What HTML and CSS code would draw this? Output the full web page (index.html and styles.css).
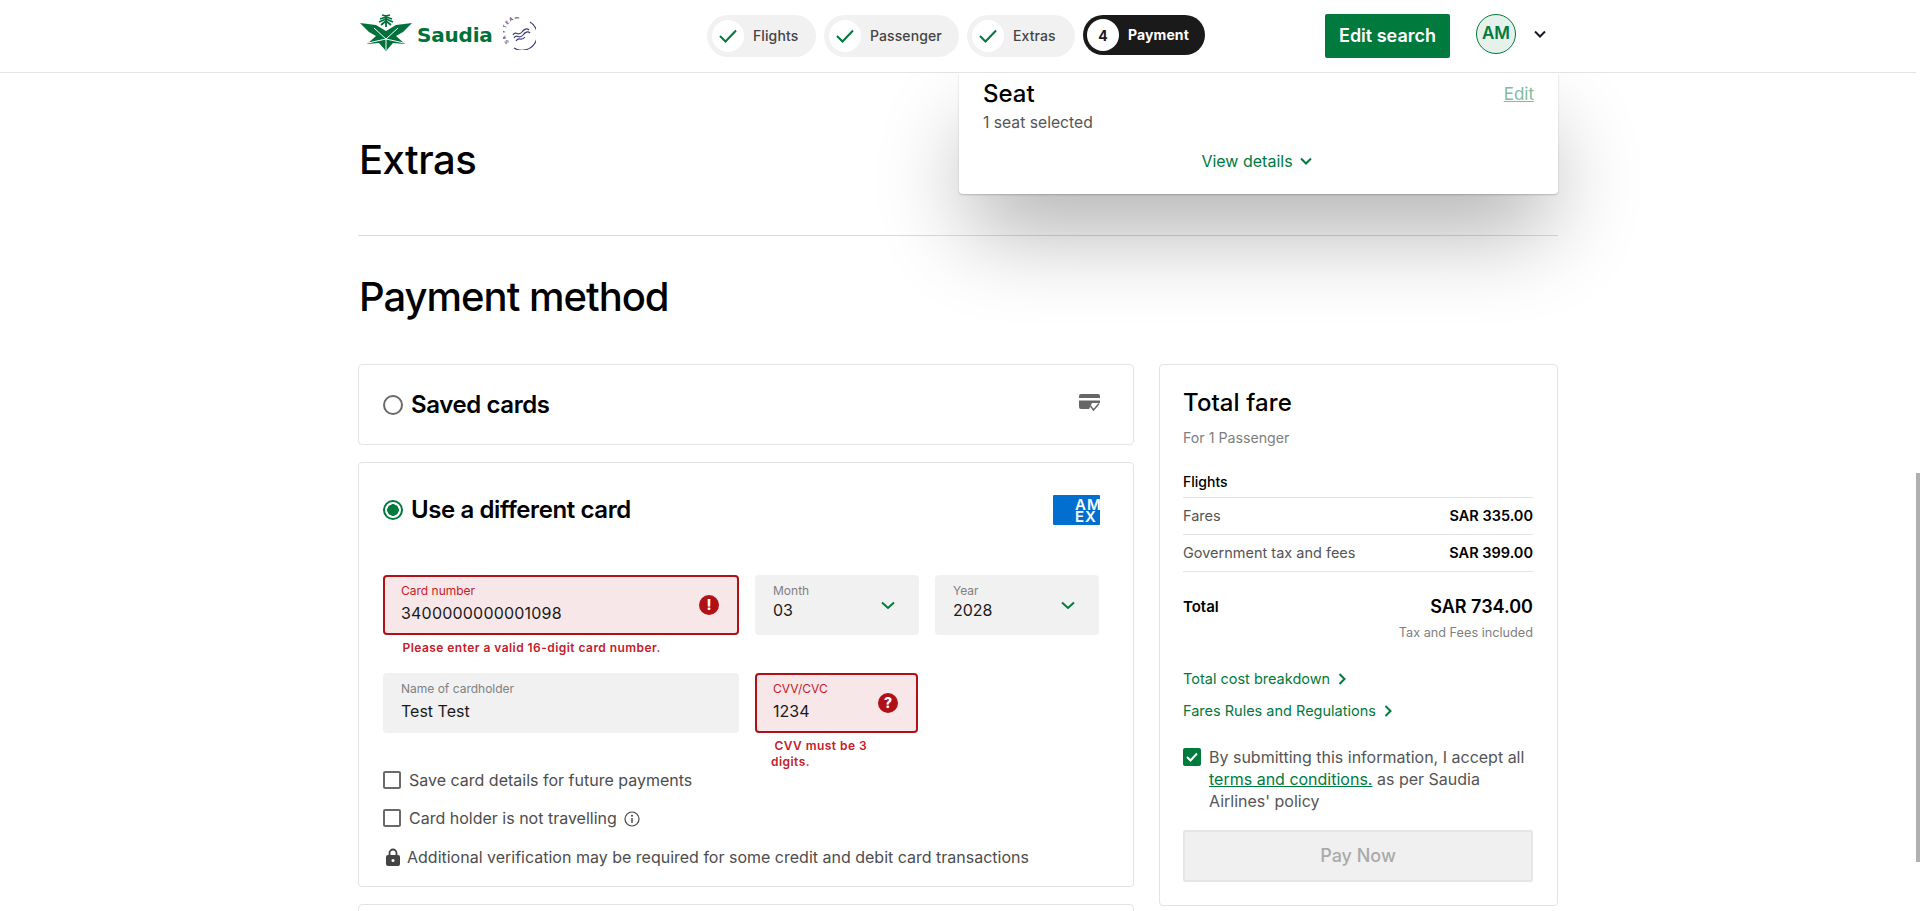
FILE: index.html
```html
<!DOCTYPE html>
<html lang="en">
<head>
<meta charset="UTF-8">
<title>Saudia - Payment</title>
<link rel="stylesheet" href="styles.css">
</head>
<body>

<header class="topbar">
  <div class="topbar-inner">
    <div class="brand">
      <svg class="emblem" width="52" height="37" viewBox="0 0 52 37">
        <g fill="none" stroke="#00713a" stroke-width="1.8">
          <path d="M26 13V1M26 3L20 5M26 2L22 1M26 3L32 5M26 2L30 1M26 5L19 8M26 5L33 8M26 7L21 11M26 7L31 11"/>
        </g>
        <path fill="#00713a" d="M0 9L16 11L26 17L36 11L52 9L43 18L36 22L45 30L33 29L26 37L19 29L7 30L16 22L9 18Z"/>
        <path fill="none" stroke="#fff" stroke-width="1" d="M14 14L26 25L38 14M26 25V36M8 29L26 25L44 29"/>
      </svg>
      <span class="wordmark">Saudia</span>
      <svg class="skyteam" width="33" height="33" viewBox="0 0 33 33">
        <path fill="none" stroke="#3d3a78" stroke-width="1.2" d="M27 5A15 15 0 0 1 11 31"/>
        <defs><path id="skyarc" d="M6 25A13 13 0 0 1 26 6"/></defs>
        <text class="skyteam-text"><textPath href="#skyarc">SKYTEAM</textPath></text>
        <path fill="none" stroke="#3d3a78" stroke-width="1.2" d="M10 18C13 13 15 20 19 15C21 12 24 11 26 13M11 21C14 16 16 23 20 18C22 15 25 14 27 16M13 24C16 19 18 25 22 20"/>
      </svg>
    </div>

    <ol class="steps">
      <li class="step step-flights"><span class="step-dot"><svg width="20" height="16" viewBox="0 0 20 16"><path class="tick" d="M2 8L7.500 13.500L18 2.500"/></svg></span>Flights</li>
      <li class="step step-passenger"><span class="step-dot"><svg width="20" height="16" viewBox="0 0 20 16"><path class="tick" d="M2 8L7.500 13.500L18 2.500"/></svg></span>Passenger</li>
      <li class="step step-extras"><span class="step-dot"><svg width="20" height="16" viewBox="0 0 20 16"><path class="tick" d="M2 8L7.500 13.500L18 2.500"/></svg></span>Extras</li>
      <li class="step step-current"><span class="step-dot">4</span>Payment</li>
    </ol>

    <div class="account">
      <button class="edit-search">Edit search</button>
      <span class="avatar">AM</span>
      <svg class="account-chev" width="12" height="8" viewBox="0 0 12 8"><path class="chev-dark" d="M1 1.500L6 6.500L11 1.500"/></svg>
    </div>
  </div>
</header>

<main class="page">
  <div class="seat-popover">
    <div class="seat-row">
      <h3>Seat</h3>
      <a class="seat-edit">Edit</a>
    </div>
    <p class="seat-note">1 seat selected</p>
    <a class="view-details">View details
      <svg width="12" height="8" viewBox="0 0 12 8"><path class="chev-green" d="M1 1.500L6 6.500L11 1.500"/></svg>
    </a>
  </div>

  <h1 class="extras-title">Extras</h1>
  <h2 class="method-title">Payment method</h2>

  <div class="columns">
    <section class="methods">
      <div class="card card-saved">
        <span class="radio"></span>
        <span class="card-title">Saved cards</span>
        <svg class="saved-icon" width="21" height="18" viewBox="0 0 21 18">
          <path fill="#666" d="M2 0H19A2 2 0 0 1 21 2V9H13L10 15H2A2 2 0 0 1 0 13V2A2 2 0 0 1 2 0Z"/>
          <rect x="0" y="4" width="21" height="2.500" fill="#fff"/>
          <path fill="none" stroke="#666" stroke-width="1.500" d="M11.500 12L14.500 16L20 9.500"/>
        </svg>
      </div>

      <div class="card card-new">
        <div class="card-head">
          <span class="radio radio-on"></span>
          <span class="card-title">Use a different card</span>
          <span class="amex"><span>AM<br>EX</span></span>
        </div>

        <div class="form-grid">
          <div>
            <div class="field field-error">
              <label>Card number</label>
              <span class="value value-low card-digits">3400000000001098</span>
              <span class="badge">!</span>
            </div>
            <p class="error">&nbsp;Please enter a valid 16-digit card number.</p>
          </div>
          <div class="field">
            <label>Month</label>
            <span class="value value-high">03</span>
            <svg class="select-chev" width="14" height="9" viewBox="0 0 14 9"><path class="chev-green" d="M1 1.500L7 7L13 1.500"/></svg>
          </div>
          <div class="field">
            <label>Year</label>
            <span class="value value-high">2028</span>
            <svg class="select-chev" width="14" height="9" viewBox="0 0 14 9"><path class="chev-green" d="M1 1.500L7 7L13 1.500"/></svg>
          </div>
          <div class="field">
            <label>Name of cardholder</label>
            <span class="value value-low">Test Test</span>
          </div>
          <div class="cvv-cell">
            <div class="field field-error">
              <label>CVV/CVC</label>
              <span class="value value-low">1234</span>
              <span class="badge">?</span>
            </div>
            <p class="error error-narrow">&nbsp;CVV must be 3 digits.</p>
          </div>
        </div>

        <div class="check-row check-row-first"><span class="checkbox"></span>Save card details for future payments</div>
        <div class="check-row"><span class="checkbox"></span>Card holder is not travelling
          <svg class="info" width="16" height="16" viewBox="0 0 16 16">
            <circle cx="8" cy="8" r="7" fill="none" stroke="#444" stroke-width="1.200"/>
            <path d="M8 7V12" stroke="#444" stroke-width="1.400"/>
            <circle cx="8" cy="4.800" r="1" fill="#444"/>
          </svg>
        </div>
        <div class="secure-row">
          <svg width="14" height="18" viewBox="0 0 14 18">
            <path fill="none" stroke="#444" stroke-width="1.800" d="M3.500 8V5A3.500 3.500 0 0 1 10.500 5V8"/>
            <rect x="0" y="7" width="14" height="11" rx="2" fill="#444"/>
            <circle cx="7" cy="12.500" r="1.500" fill="#fff"/>
          </svg>
          Additional verification may be required for some credit and debit card transactions
        </div>
      </div>

      <div class="card card-next"></div>
    </section>

    <aside class="fare">
      <h3 class="fare-title">Total fare</h3>
      <p class="fare-sub">For 1 Passenger</p>
      <div class="fare-group">Flights</div>
      <div class="fare-row"><span>Fares</span><b>SAR 335.00</b></div>
      <div class="fare-row"><span>Government tax and fees</span><b>SAR 399.00</b></div>
      <div class="fare-total"><span>Total</span><b>SAR 734.00</b></div>
      <p class="fare-tax">Tax and Fees included</p>
      <a class="fare-link fare-link-first">Total cost breakdown
        <svg width="8" height="12" viewBox="0 0 8 12"><path class="chev-green" d="M1.500 1L6.500 6L1.500 11"/></svg>
      </a>
      <a class="fare-link">Fares Rules and Regulations
        <svg width="8" height="12" viewBox="0 0 8 12"><path class="chev-green" d="M1.500 1L6.500 6L1.500 11"/></svg>
      </a>
      <div class="terms">
        <span class="checkbox checkbox-on">
          <svg width="12" height="10" viewBox="0 0 12 10"><path fill="none" stroke="#fff" stroke-width="2" d="M1 5L4.500 8.500L11 1.500"/></svg>
        </span>
        <p>By submitting this information, I accept all <a>terms and conditions.</a> as per Saudia Airlines' policy</p>
      </div>
      <button class="pay-now">Pay Now</button>
    </aside>
  </div>
</main>

<div class="scroll-thumb"></div>

</body>
</html>
```

FILE: styles.css
```css
* {
  box-sizing: border-box;
}

html, body {
  height: 911px;
  overflow: hidden;
}

body {
  margin: 0;
  padding-right: 4px;
  background: #fff;
  color: #000;
  font-family: Inter, "Liberation Sans", sans-serif;
  font-size: 16px;
}

h1, h2, h3, p, ol {
  margin: 0;
  padding: 0;
}

/* top bar */
.topbar {
  position: relative;
  z-index: 5;
  height: 73px;
  background: #fff;
  border-bottom: 1px solid #e3e3e3;
}

.topbar-inner {
  width: 1200px;
  height: 72px;
  margin: 0 auto;
  display: flex;
  align-items: center;
}

.brand {
  width: 349px;
  padding-left: 2px;
  display: flex;
  align-items: center;
}

.emblem {
  margin-top: -7px;
}

.wordmark {
  margin-left: 5px;
  margin-top: -3px;
  color: #00713a;
  font-family: "DejaVu Sans", sans-serif;
  font-size: 20px;
  font-weight: 700;
  line-height: 28px;
  letter-spacing: -0.2px;
}

.skyteam {
  margin-left: 10px;
  margin-top: -6px;
}

.skyteam-text {
  fill: #3d3a78;
  font-size: 5px;
  font-weight: 600;
  letter-spacing: 1.2px;
}

.steps {
  display: flex;
  gap: 8px;
  list-style: none;
}

.step {
  height: 42px;
  padding-left: 5px;
  padding-bottom: 2px;
  border-radius: 21px;
  background: #f1f1f1;
  color: #444;
  display: flex;
  align-items: center;
  gap: 9px;
  font-size: 14px;
  font-weight: 500;
  letter-spacing: 0.1px;
}

.step-flights { width: 109px; }
.step-passenger { width: 135px; }
.step-extras { width: 108px; }

.step-dot {
  width: 32px;
  height: 32px;
  margin-bottom: -2px;
  border-radius: 50%;
  background: #fff;
  color: #1a1a1a;
  display: flex;
  align-items: center;
  justify-content: center;
}

.step-current {
  width: 122px;
  height: 40px;
  padding-left: 4px;
  background: #1a1a1a;
  color: #fff;
  font-weight: 700;
}

.tick {
  fill: none;
  stroke: #007a3d;
  stroke-width: 2;
}

.account {
  margin-left: auto;
  padding-right: 12px;
  display: flex;
  align-items: center;
}

.edit-search {
  width: 125px;
  height: 44px;
  padding-bottom: 2px;
  border: 0;
  border-radius: 2px;
  background: #007a3d;
  color: #fff;
  font: 600 18px Inter, sans-serif;
}

.avatar {
  width: 40px;
  height: 40px;
  margin-left: 26px;
  margin-right: 18px;
  margin-top: -4px;
  padding-bottom: 2px;
  border: 1px solid #007a3d;
  border-radius: 50%;
  background: #e6f1eb;
  color: #007a3d;
  font-size: 17px;
  font-weight: 600;
  display: flex;
  align-items: center;
  justify-content: center;
}

.account-chev {
  margin-top: -4px;
}

.chev-dark, .chev-green {
  fill: none;
  stroke-width: 2;
}

.chev-dark { stroke: #1a1a2a; }
.chev-green { stroke: #007a3d; }

/* page */
.page {
  position: relative;
  width: 1200px;
  margin: 0 auto;
}

.extras-title, .method-title {
  font-size: 40px;
  font-weight: 500;
  line-height: 48px;
  letter-spacing: -0.5px;
}

.extras-title {
  padding: 63px 0 51px 1px;
  height: 163px;
  border-bottom: 1px solid #dcdcdc;
}

.method-title {
  margin-top: 37px;
  padding-left: 1px;
  letter-spacing: -1px;
}

.seat-popover {
  position: absolute;
  z-index: 3;
  top: 0;
  left: 601px;
  width: 599px;
  height: 121px;
  padding: 8px 24px 0;
  background: #fff;
  border-radius: 0 0 4px 4px;
  box-shadow: 0 1px 2px rgba(0,0,0,.2), 0 46px 90px -10px rgba(0,0,0,.32);
}

.seat-row {
  display: flex;
  justify-content: space-between;
  align-items: center;
}

.seat-row h3 {
  font-size: 24px;
  font-weight: 500;
  line-height: 26px;
}

.seat-edit {
  color: #80bd9e;
  font-size: 17px;
  text-decoration: underline;
}

.seat-note {
  margin-top: 5px;
  color: #555;
  font-size: 15.7px;
  line-height: 22px;
}

.view-details {
  margin-top: 16px;
  padding-right: 4px;
  display: flex;
  justify-content: center;
  align-items: center;
  gap: 7px;
  color: #007a3d;
  font-size: 16px;
  line-height: 22px;
}

.columns {
  margin-top: 43px;
  display: flex;
  gap: 25px;
  align-items: flex-start;
}

/* payment methods */
.methods {
  width: 776px;
}

.card {
  border: 1px solid #e3e3e3;
  border-radius: 4px;
  background: #fff;
}

.card-saved {
  height: 81px;
  padding: 0 33px 0 24px;
  display: flex;
  align-items: center;
  gap: 8px;
}

.card-title {
  font-size: 24px;
  font-weight: 600;
  line-height: 32px;
  letter-spacing: -0.4px;
}

.saved-icon {
  margin-left: auto;
  margin-top: -3px;
}

.radio {
  width: 20px;
  height: 20px;
  border: 2px solid #6a6a6a;
  border-radius: 50%;
  background: #fff;
}

.radio-on {
  border-color: #007a3d;
  background: radial-gradient(circle, #007a3d 0 5.5px, #fff 6px);
}

.card-new {
  height: 425px;
  margin-top: 17px;
  padding: 31px 33px 0 24px;
}

.card-head {
  height: 32px;
  display: flex;
  align-items: center;
  gap: 8px;
}

.amex {
  width: 47px;
  height: 30px;
  margin-left: auto;
  padding: 4px 0 0 22px;
  border-radius: 1px;
  background: #016fd0;
  color: #fff;
  font-size: 15px;
  font-weight: 600;
  line-height: 12px;
  letter-spacing: 1px;
  overflow: hidden;
}

.amex span {
  display: block;
  width: 40px;
}

.form-grid {
  margin-top: 49px;
  display: grid;
  grid-template-columns: 356px 164px 164px;
  column-gap: 16px;
  row-gap: 17px;
}

.cvv-cell {
  margin-right: 1px;
}

.field {
  position: relative;
  height: 60px;
  padding: 6px 16px 0;
  border: 2px solid #f1f1f1;
  border-radius: 4px;
  background: #f1f1f1;
}

.field label {
  display: block;
  color: #808080;
  font-size: 12px;
  line-height: 16px;
}

.value {
  display: block;
  color: #1a1a1a;
  font-size: 16px;
  line-height: 24px;
}

.value-low {
  margin-top: 2px;
}

.value-high {
  margin-top: -1px;
}

.card-digits {
  letter-spacing: 0.2px;
}

.field-error {
  border-color: #b01116;
  background: #f7e7e8;
}

.field-error label {
  color: #c5202a;
}

.badge {
  position: absolute;
  top: 18px;
  right: 18px;
  width: 20px;
  height: 20px;
  border-radius: 50%;
  background: #b01116;
  color: #fff;
  font-size: 14px;
  font-weight: 800;
  line-height: 20px;
  text-align: center;
}

.select-chev {
  position: absolute;
  top: 24px;
  right: 22px;
}

.error {
  margin-top: 5px;
  padding-left: 16px;
  color: #c5202a;
  font-size: 12px;
  font-weight: 600;
  line-height: 16px;
  letter-spacing: 0.45px;
}

.error-narrow {
  padding-right: 30px;
}

.check-row {
  height: 18px;
  margin-bottom: 20px;
  display: flex;
  align-items: center;
  gap: 8px;
  color: #4d4d4d;
  font-size: 16px;
}

.check-row-first {
  margin-top: 1px;
}

.checkbox {
  flex: none;
  width: 18px;
  height: 18px;
  border: 2px solid #6a6a6a;
  border-radius: 2px;
  background: #fff;
}

.checkbox-on {
  border-color: #007a3d;
  background: #007a3d;
  display: flex;
  align-items: center;
  justify-content: center;
}

.info {
  margin-left: -1px;
  margin-top: 2px;
}

.secure-row {
  margin-top: 21px;
  padding-left: 3px;
  display: flex;
  align-items: center;
  gap: 7px;
  color: #4d4d4d;
  font-size: 16px;
  line-height: 18px;
}

.card-next {
  height: 60px;
  margin-top: 17px;
}

/* fare summary */
.fare {
  width: 399px;
  height: 542px;
  padding: 22px 24px 0 23px;
  border: 1px solid #e3e3e3;
  border-radius: 4px;
}

.fare-title {
  font-size: 24px;
  font-weight: 500;
  line-height: 32px;
  letter-spacing: 0.1px;
}

.fare-sub {
  margin-top: 9px;
  color: #808080;
  font-size: 14.2px;
  line-height: 20px;
}

.fare-group {
  margin-top: 24px;
  padding-bottom: 5px;
  border-bottom: 1px solid #e3e3e3;
  font-size: 14px;
  font-weight: 500;
  line-height: 20px;
}

.fare-row {
  height: 37px;
  padding-bottom: 2px;
  border-bottom: 1px solid #e3e3e3;
  display: flex;
  justify-content: space-between;
  align-items: center;
  color: #555;
  font-size: 14.5px;
}

.fare-row b {
  color: #000;
  font-weight: 600;
}

.fare-total {
  margin-top: 21px;
  display: flex;
  justify-content: space-between;
  align-items: center;
  font-size: 15px;
  font-weight: 600;
  line-height: 28px;
}

.fare-total b {
  font-size: 18px;
  font-weight: 600;
}

.fare-tax {
  margin-top: 4px;
  color: #808080;
  font-size: 12.7px;
  line-height: 16px;
  text-align: right;
}

.fare-link {
  margin-top: 12px;
  display: flex;
  align-items: center;
  gap: 8px;
  color: #007a3d;
  font-size: 14.5px;
  line-height: 20px;
}

.fare-link-first {
  margin-top: 28px;
}

.terms {
  margin-top: 25px;
  display: flex;
  gap: 8px;
  color: #555;
  font-size: 16px;
  line-height: 22px;
}

.terms .checkbox {
  margin-top: 2px;
}

.terms a {
  color: #007a3d;
  text-decoration: underline;
}

.pay-now {
  width: 350px;
  height: 52px;
  margin-top: 18px;
  padding-bottom: 3px;
  border: 2px solid #e6e6e6;
  border-radius: 2px;
  background: #f0f0f0;
  color: #aaa;
  font: 500 18px Inter, sans-serif;
}

.scroll-thumb {
  position: fixed;
  top: 473px;
  right: 0;
  width: 4px;
  height: 389px;
  background: #b0b0b0;
}
```
